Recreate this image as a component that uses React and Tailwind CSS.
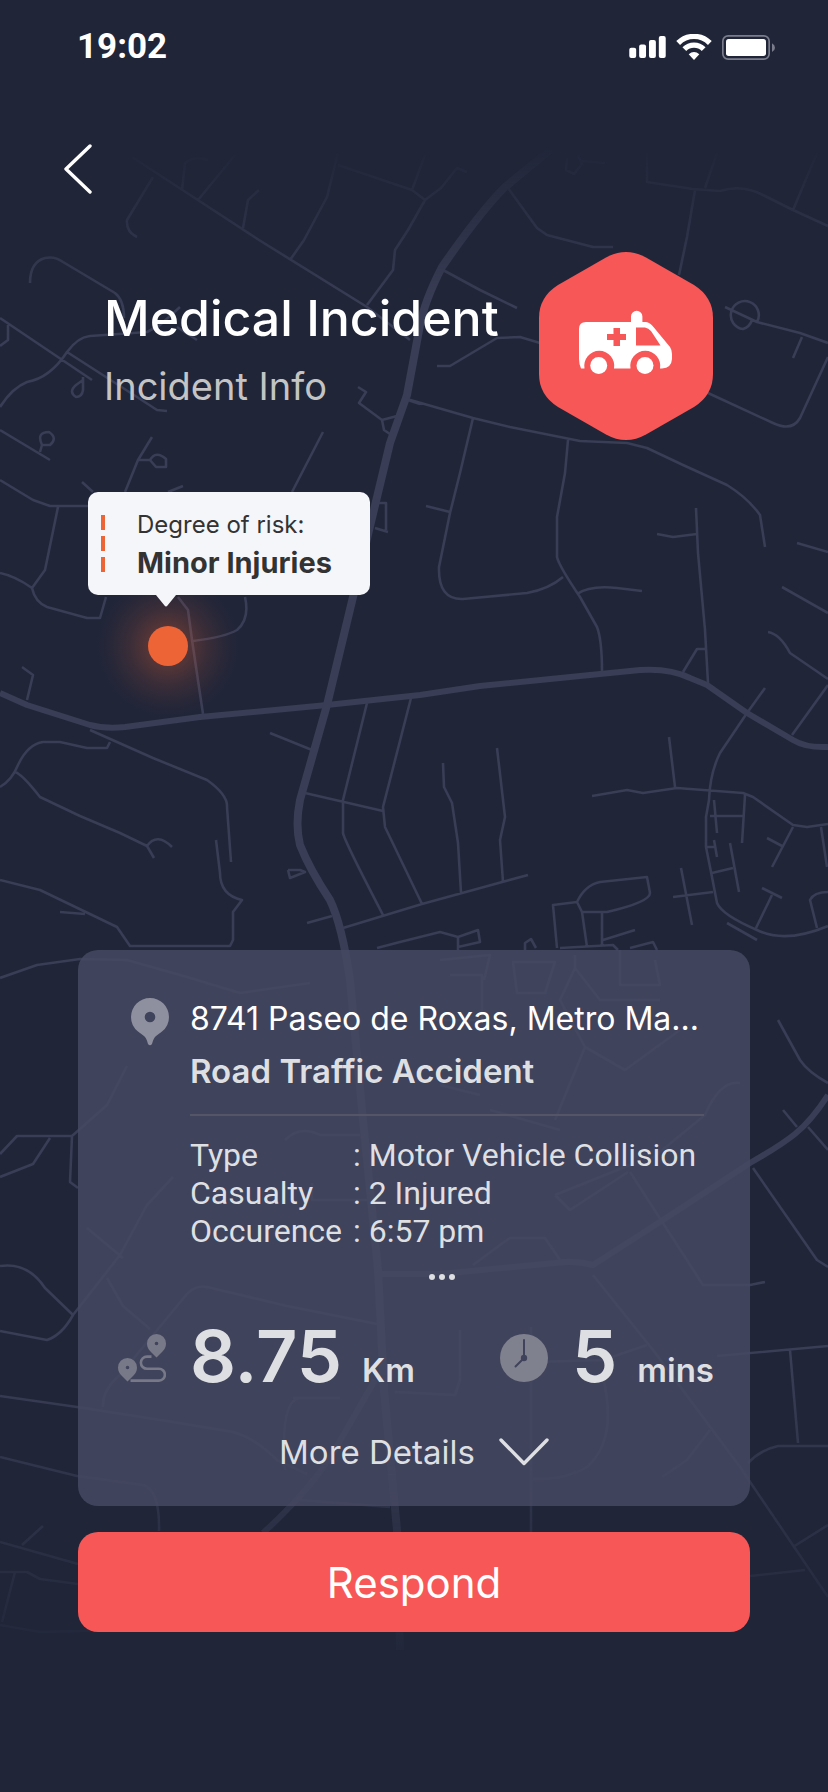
const MINOR_ROADS = [
  'M132 157L259 240L367 307L410 340',
  'M338 153L327 197L304 240L290 260',
  'M338 165L412 190L425 200L408 230L395 250L393 270L367 305',
  'M425 200L441 188L457 168L467 172M412 190L425 155',
  'M153 177L127 220Q126 232 137 237',
  'M182 190L185 163Q195 155 208 160M198 200L235 155M243 228L248 200L259 190',
  'M508 188L537 228L547 235L593 247H613',
  'M647 153V182L693 189L720 191Q742 184 763 195L793 210L828 226',
  'M717 153L705 188M817 153L793 210M695 190L687 237L679 275',
  'M567 158L566 170L574 174L582 164L578 155M582 161L605 163',
  'M443 270L480 290L517 308',
  'M437 366H450L497 338L520 337L540 343',
  'M407 399L473 418L510 427L580 441L627 443L647 448L683 465L727 485Q748 498 760 515L765 547',
  'M473 418L460 473L450 513L439 567Q438 600 463 599L527 593Q549 589 563 577',
  'M426 506L450 512',
  'M568 440L565 473L557 517V557Q559 566 580 597L597 627Q602 640 602 672',
  'M577 594Q590 585 617 588L642 591',
  'M696 508L698 553L705 630L708 683M657 534L673 537L697 534M683 672L697 649H705',
  'M725 307L757 322L800 333L828 343M757 322A14 14 0 1 0 743 329A14 14 0 0 0 752 320M802 337L793 358',
  'M708 393L773 423Q792 432 800 418L828 357',
  'M797 543L828 552M782 587L828 613M768 632Q780 634 790 653L828 679M828 685L792 735',
  'M30 283Q30 262 45 258Q55 256 63 262L115 293Q124 300 124 318',
  'M0 318L92 380M8 325V340L0 346',
  'M0 407Q12 388 27 382Q50 378 67 352Q78 337 90 336L147 332L160 325L180 307',
  'M177 327L197 340M67 352L137 397L157 410L167 411',
  'M83 377V390Q82 397 76 397Q68 392 76 385L83 380',
  'M0 430L50 460M40 452L42 445Q36 432 49 432Q58 438 50 445H42',
  'M152 437L138 460L125 492M138 460H150Q156 450 166 459V467H156L150 460',
  'M323 432L292 492M358 387L366 392L359 403L382 420M382 420L397 416M382 420L384 430L390 434',
  'M408 400L420 404M378 503H386L386 530M375 528L388 532',
  'M0 480L33 500L50 506H88M58 507L45 570L32 588M0 573Q15 576 32 588Q35 602 47 607L87 618H100L106 597',
  'M82 482L93 492M168 492L183 486',
  'M245 597Q250 619 237 630Q225 637 193 641M178 597L188 610L192 640L203 714M22 667L33 675L27 700',
  'M765 688L747 713L720 753Q710 773 709 800L706 817V847L712 877L717 903Q722 915 757 930Q785 944 828 926',
  'M592 796L627 790L643 793L677 788L743 793L753 797L793 825L807 827L828 824',
  'M669 737L675 787M443 763L444 787L452 803L458 843L461 893',
  'M497 748L505 817L500 840L503 882M343 928L422 904L528 875',
  'M367 703L343 800V833Q344 840 383 915M411 698L383 807L385 827L422 904',
  'M305 793L383 811M270 733L312 750M288 870H300L305 872L290 878L288 870M307 923L332 916',
  'M90 730L153 758L207 780Q228 795 227 807L231 862',
  'M0 787Q12 780 18 765Q28 744 43 742H60L87 748H107L110 742',
  'M15 772Q22 774 40 797L80 816L120 833L147 846L154 858M147 846Q157 832 172 847',
  'M0 880L40 890L117 927L130 946H230L233 940V912L242 900Q220 895 220 873L216 840M60 912L85 914',
  'M0 978L37 965L80 959L127 960L187 977L240 993L310 983',
  'M577 902Q585 885 600 882L647 877L650 893Q650 902 607 912H582ZM557 948L553 905L577 902M582 912L587 947M602 913V945M603 940L635 930',
  'M560 948L613 945L618 950M630 948L653 942L657 950M525 950V943L531 939L536 948',
  'M377 948L400 942L440 932L458 937L478 930L480 942L458 947M458 937V950',
  'M673 897L713 892M681 868L692 925M730 843L739 892M712 873L733 868',
  'M714 800L717 833M714 840L717 857M706 847H714M710 816H743M745 795L742 843',
  'M793 827L772 867M767 838L782 846M762 888L782 898M772 895L756 928M821 827L827 867',
  'M828 892Q814 892 810 900L817 928M727 923L757 940',
  'M778 1020L800 1060Q808 1072 828 1083M783 1110L797 1127M808 1127L828 1150',
  'M753 1168L817 1260L828 1267M630 1172L703 1285L750 1285L765 1282',
  'M593 1275L597 1280L653 1350L740 1467L828 1597',
  'M717 1356L828 1346M790 1350L798 1443M748 1463Q760 1450 778 1446H828M793 1547L828 1525M750 1576L805 1570',
  'M531 1327V1532M535 1362L603 1360L647 1345M603 1377Q618 1440 587 1467Q565 1480 533 1479M710 1430L687 1460L662 1477',
  'M0 1154L17 1136H72L70 1182L78 1188M0 1177L33 1164L50 1138M72 1136L107 1105L127 1066',
  'M0 1266Q28 1262 45 1288L73 1315M0 1331L47 1340Q62 1335 73 1315L120 1255L147 1205L173 1177M87 1228L123 1258',
  'M107 1278L123 1306L150 1329M103 1407Q102 1390 120 1375L182 1300Q193 1284 207 1287L287 1306L377 1324',
  'M0 1396L77 1407L167 1421L233 1432Q255 1438 277 1460L307 1474',
  'M0 1457L77 1476L143 1485Q160 1490 159 1531',
  'M0 1542L78 1564M22 1545L43 1526M0 1572H27L40 1579L78 1584M15 1572L2 1622M0 1625L40 1632L120 1630',
  'M513 962H555L545 993H517ZM575 955V968L600 1000H660M575 968L560 1000L585 1047L625 1070L680 1030M585 1047L555 1120',
  'M450 975H482V1020H425M440 960L490 955L484 980M620 950V985H660L655 960',
  'M285 1140Q300 1125 320 1135H360M312 1183V1200H380M555 1195L630 1165M555 1195L570 1210L628 1172',
  'M473 1265L500 1245L510 1238H545L560 1260M293 1398H340M300 1500L390 1507M285 1470Q280 1400 300 1398H340M395 1392L455 1395L460 1380V1330',
  'M650 1160L705 1115Q720 1080 740 1083M490 1110L560 1130M440 1085L480 1095',
];

const MAIN_ROADS = [
  'M0 693L27 705L90 725Q105 729 125 727L200 717L327 705L420 695L480 686L600 674L640 670Q670 668 690 678L707 685L747 713L793 740Q806 748 828 747',
  'M828 1095Q812 1120 795 1134Q780 1146 750 1163L663 1220L593 1265Q575 1260 555 1263L440 1274H380',
  'M375 1380L333 1453Q310 1490 263 1533',
];

function MapBackdrop() {
  return (
    <svg
      className="absolute inset-0 h-full w-full"
      viewBox="0 0 828 1792"
      preserveAspectRatio="xMidYMin slice"
      aria-hidden="true"
    >
      <defs>
        <linearGradient id="fade" x1="0" y1="0" x2="0" y2="1792" gradientUnits="userSpaceOnUse">
          <stop offset="0.08" stopColor="#000" />
          <stop offset="0.17" stopColor="#fff" />
          <stop offset="0.76" stopColor="#fff" />
          <stop offset="0.94" stopColor="#000" />
        </linearGradient>
        <mask id="fadeMask" maskUnits="userSpaceOnUse" x="0" y="0" width="828" height="1792">
          <rect width="828" height="1792" fill="url(#fade)" />
        </mask>
      </defs>
      <g mask="url(#fadeMask)" fill="none" stroke="#393d55" strokeLinejoin="round">
        <path d={MINOR_ROADS.join('')} strokeWidth="2.6" />
        <path d={MAIN_ROADS.join('')} strokeWidth="6" />
        <path
          d="M550 150L505 187Q480 212 442 267Q425 300 420 325L407 395L390 443L353 597L327 705L300 800Q295 825 300 845Q310 870 330 900Q342 925 350 980L363 1120L378 1270L384 1390L397 1530L400 1650"
          strokeWidth="8"
        />
      </g>
    </svg>
  );
}

function SignalIcon() {
  return (
    <svg className="h-[22px] w-[37px]" viewBox="0 0 111 67" fill="#fff" aria-hidden="true">
      <rect x="0" y="36" width="21" height="31" rx="6" />
      <rect x="30" y="26" width="21" height="41" rx="6" />
      <rect x="60" y="12" width="21" height="55" rx="6" />
      <rect x="90" y="0" width="21" height="67" rx="6" />
    </svg>
  );
}

function WifiIcon() {
  return (
    <svg className="h-[26px] w-9" viewBox="0 0 108 78" fill="none" stroke="#fff" strokeWidth="16" aria-hidden="true">
      <path d="M6.5 27A67 67 0 0 1 101.5 27" />
      <path d="M25 45.5A41 41 0 0 1 83 45.5" />
      <path d="M54 78L38 61Q54 47 70 61Z" fill="#fff" stroke="none" />
    </svg>
  );
}

function BatteryIcon() {
  return (
    <svg className="h-[25px] w-[53px]" viewBox="0 0 159 75" aria-hidden="true">
      <rect x="2.5" y="2.5" width="139" height="70" rx="16" fill="none" stroke="#797c8a" strokeWidth="5" />
      <rect x="12" y="12" width="120" height="51" rx="8" fill="#fff" />
      <path d="M150 25Q159 30 159 38Q159 46 150 51Z" fill="#797c8a" />
    </svg>
  );
}

function AmbulanceBadge() {
  return (
    <svg className="h-[188px] w-[174px] shrink-0" viewBox="0 0 174 188" role="img" aria-label="Ambulance">
      <path
        d="M67 5.5Q87 -5.5 107 5.5L155 33Q174 45 174 66V122Q174 143 155 155L107 182.5Q87 193.5 67 182.5L19 155Q0 143 0 122V66Q0 45 19 33Z"
        fill="#f75757"
      />
      <path
        d="M47 70H92V64.5A5.7 5.7 0 0 1 103.4 64.5V70H107Q111 70.5 114.5 75L131 95Q133 98 133 102V107Q132.5 116 123 116.5H121A15 15 0 1 0 91.5 116.5H75A15 15 0 1 0 45.5 116.5H42Q40 112 40 107V77Q40 70 47 70Z"
        fill="#fff"
      />
      <path d="M97 75.5H106Q109.5 76 112 79L121.5 93.5H97ZM74.5 76H81V82H87V88H81V94H74.5V88H68V82H74.5Z" fill="#f75757" />
      <circle cx="59.7" cy="113.5" r="8.5" fill="#fff" />
      <circle cx="106" cy="113.5" r="8.5" fill="#fff" />
    </svg>
  );
}

function PinIcon() {
  return (
    <svg className="h-12 w-[38px]" viewBox="0 0 38 48" fill="#8e909f" aria-hidden="true">
      <path
        fillRule="evenodd"
        d="M19 0A19 19 0 0 1 38 19Q38 28 31 33.5L25 38Q22.5 40 21 46Q19 48.5 17 46Q15.5 40 13 38L7 33.5Q0 28 0 19A19 19 0 0 1 19 0ZM19 13.7A5.3 5.3 0 1 0 19 24.3A5.3 5.3 0 1 0 19 13.7Z"
      />
    </svg>
  );
}

function RouteIcon() {
  return (
    <svg className="h-12 w-12" viewBox="0 0 48 48" fill="#777988" aria-hidden="true">
      <path fillRule="evenodd" d="M38.5 0A9.5 9.5 0 0 1 48 9.5Q48 14 44.5 17.5L38.5 23.5L32.5 17.5Q29 14 29 9.5A9.5 9.5 0 0 1 38.5 0ZM38.5 7.7A1.8 1.8 0 1 0 38.5 11.3A1.8 1.8 0 1 0 38.5 7.7Z" />
      <path fillRule="evenodd" d="M9.5 24A9.5 9.5 0 0 1 19 33.5Q19 38 15.5 41.5L9.5 47.5L3.5 41.5Q0 38 0 33.5A9.5 9.5 0 0 1 9.5 24ZM9.5 31.7A1.8 1.8 0 1 0 9.5 35.3A1.8 1.8 0 1 0 9.5 31.7Z" />
      <path d="M12.5 46.6H41a5.8 5.8 0 0 0 0-11.8H29a6 6 0 0 1 0-12.2h4.5" fill="none" stroke="#777988" strokeWidth="2.6" />
    </svg>
  );
}

function ClockIcon() {
  return (
    <svg className="h-12 w-12" viewBox="0 0 48 48" aria-hidden="true">
      <circle cx="24" cy="24" r="24" fill="#80818f" />
      <circle cx="24" cy="24" r="3.2" fill="#40435c" />
      <path d="M24 6V24L15.5 32.5" fill="none" stroke="#40435c" strokeWidth="2" strokeLinecap="round" />
    </svg>
  );
}

const DETAILS = [
  ['Type', 'Motor Vehicle Collision'],
  ['Casualty', '2 Injured'],
  ['Occurence', '6:57 pm'],
];

export default function App() {
  return (
    <div className="relative min-h-screen overflow-hidden bg-[#202538] font-['Inter',sans-serif] text-[#dedfe2]">
      <MapBackdrop />
      <div className="relative flex flex-col pb-40">
        <header className="flex h-[94px] items-center justify-between pr-[53px] pl-[77px]">
          <time className="font-['Roboto',sans-serif] text-[35px] leading-10 font-bold text-white">19:02</time>
          <div className="flex items-center gap-[10px]">
            <SignalIcon />
            <WifiIcon />
            <BatteryIcon />
          </div>
        </header>

        <button type="button" aria-label="Back" className="mt-[50px] ml-16 h-[50px] w-7">
          <svg className="h-full w-full" viewBox="0 0 28 50" fill="none" stroke="#fff" strokeWidth="3.4" strokeLinecap="round" strokeLinejoin="round">
            <path d="M26 2L2 25L26 48" />
          </svg>
        </button>

        <div className="mt-[58px] flex items-start justify-between pr-[115px] pl-[104px]">
          <div className="pt-9">
            <h1 className="text-[50px] leading-[60px] font-medium whitespace-nowrap text-white">Medical Incident</h1>
            <p className="mt-2 text-[38px] leading-[60px] text-[#c4c4c4]">Incident Info</p>
          </div>
          <AmbulanceBadge />
        </div>

        <div className="mt-[52px] ml-[88px] flex w-[282px] flex-col">
          <div className="relative flex h-[103px] items-center rounded-[10px] bg-[#f5f6fa] pl-[13px] text-[#333]">
            <div className="flex w-9 flex-col gap-[6px]">
              <span className="h-[15px] w-1 bg-[#ed6437]" />
              <span className="h-[15px] w-1 bg-[#ed6437]" />
              <span className="h-[15px] w-1 bg-[#ed6437]" />
            </div>
            <div className="whitespace-nowrap">
              <p className="text-[24px] leading-[38px]">Degree of risk:</p>
              <p className="text-[29px] leading-[38px] font-bold">Minor Injuries</p>
            </div>
            <svg className="absolute top-full left-[68px] h-3 w-5" viewBox="0 0 20 12" fill="#f5f6fa" aria-hidden="true">
              <path d="M0 0H20L11.5 10.5Q10 12.5 8.5 10.5Z" />
            </svg>
          </div>
          <div className="mt-[-21px] ml-2 h-36 w-36 bg-[radial-gradient(circle_closest-side,rgba(237,100,55,0.36)_0%,rgba(237,100,55,0.26)_28%,rgba(237,100,55,0.12)_55%,rgba(237,100,55,0.03)_82%,rgba(237,100,55,0)_100%)] p-[52px]">
            <div className="h-10 w-10 rounded-full bg-[#ed6437]" />
          </div>
        </div>

        <main className="mx-[78px] mt-[232px] flex flex-col gap-[26px]">
          <section className="rounded-[20px] bg-[#454962]/85 pt-[43px] pb-[29px]">
            <div className="flex pr-[46px]">
              <div className="w-28 shrink-0 pt-[5px] pl-[53px]">
                <PinIcon />
              </div>
              <div className="min-w-0 flex-1">
                <h2 className="text-[32px] leading-[52px] whitespace-nowrap text-white">8741 Paseo de Roxas, Metro Ma...</h2>
                <p className="text-[33px] leading-[52px] font-semibold">Road Traffic Accident</p>
                <hr className="mt-[17px] border-t-2 border-[#545668]" />
                <dl className="mt-5 grid grid-cols-[163px_1fr] font-['Roboto',sans-serif] text-[32px] leading-[38px]">
                  {DETAILS.map(([label, value]) => (
                    <div key={label} className="contents">
                      <dt>{label}</dt>
                      <dd className="whitespace-nowrap">: {value}</dd>
                    </div>
                  ))}
                </dl>
              </div>
            </div>

            <svg className="mx-auto mt-[23px] h-2 w-[26px] translate-x-7" viewBox="0 0 26 8" fill="#dedfe2" aria-hidden="true">
              <circle cx="3" cy="4" r="3" />
              <circle cx="13" cy="4" r="3" />
              <circle cx="23" cy="4" r="3" />
            </svg>

            <div className="mt-[35px] flex h-20 items-baseline justify-between pr-9 pl-10">
              <div className="flex items-baseline gap-6">
                <RouteIcon />
                <p className="flex items-baseline gap-5 font-semibold">
                  <span className="text-[72px] leading-[80px]">8.75</span>
                  <span className="text-[33px] leading-10">Km</span>
                </p>
              </div>
              <div className="flex items-baseline gap-6">
                <ClockIcon />
                <p className="flex items-baseline gap-5 font-semibold">
                  <span className="text-[72px] leading-[80px]">5</span>
                  <span className="text-[33px] leading-10">mins</span>
                </p>
              </div>
            </div>

            <button type="button" className="mx-auto mt-[31px] flex items-center gap-6 text-[33px] leading-[50px]">
              More Details
              <svg className="h-7 w-[50px]" viewBox="0 0 50 28" fill="none" stroke="#dedfe2" strokeWidth="3.4" strokeLinecap="round" strokeLinejoin="round" aria-hidden="true">
                <path d="M2 2L25 25.5L48 2" />
              </svg>
            </button>
          </section>

          <button type="button" className="h-[100px] rounded-[20px] bg-[#f75757] text-[42px] text-white">
            Respond
          </button>
        </main>
      </div>
    </div>
  );
}
